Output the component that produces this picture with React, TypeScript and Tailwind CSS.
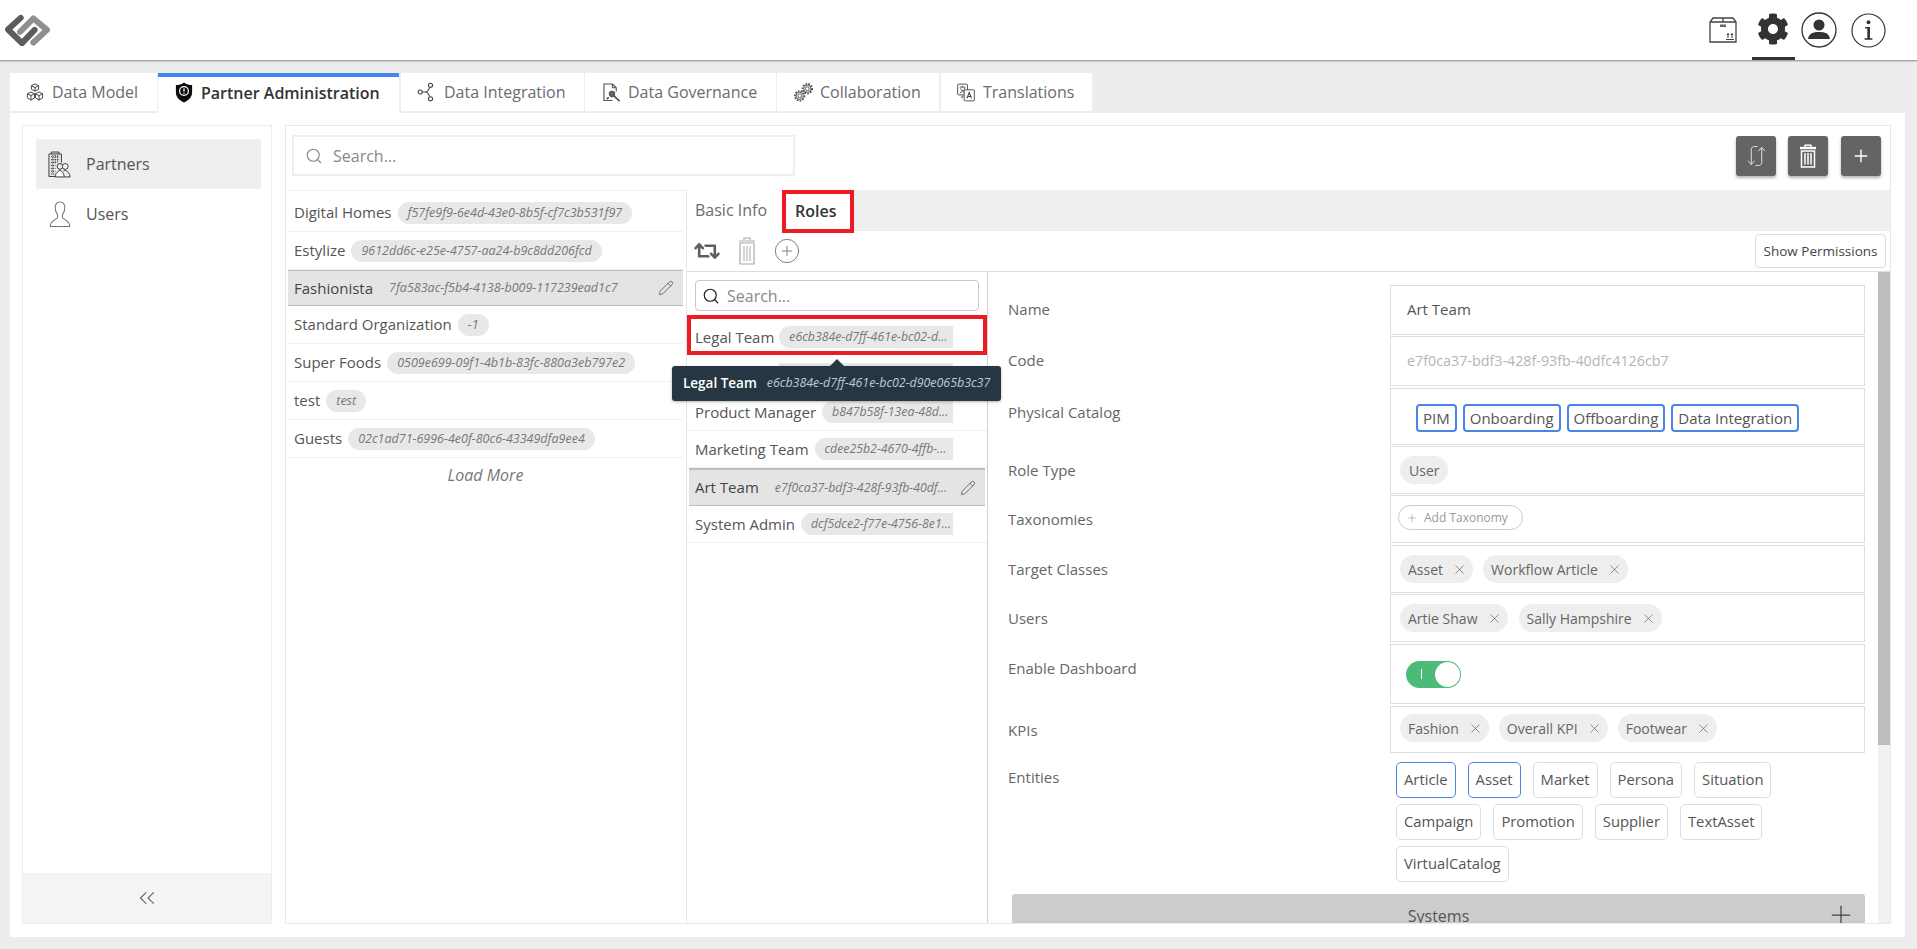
import React from 'react';
import { Search, Pencil, X, Plus, CirclePlus, ChevronsLeft } from 'lucide-react';
import { FaRetweet, FaCog } from 'react-icons/fa';

const Logo = () => (
  <svg viewBox="15 25 135 95" className="w-[45px] h-[32px]" fill="none" strokeWidth="18" strokeLinejoin="round" strokeLinecap="round">
    <path d="M60 78 L100 38 L141 72 L100 110" stroke="#8f8f8f" />
    <path d="M62 36 L24 71 L66 112 L104 72" stroke="#5c5c5c" />
  </svg>
);

const BoxIcon = () => (
  <svg viewBox="0 0 28 26" className="w-[28px] h-[26px]" fill="none" stroke="#444" strokeWidth="1.3">
    <path d="M1 5 L4 1 H24 L27 5 V25 H1 Z" />
    <path d="M1 5 H27 M14 1 V5" />
    <rect x="11" y="7.5" width="6" height="2.5" fill="#666" stroke="none" />
    <path d="M17 22.5 H25 M19 21 V16.5 M23 21 V16.5 M18 18 L19 16.5 L20 18 M22 18 L23 16.5 L24 18" strokeWidth="1" />
  </svg>
);

const UserCircle = () => (
  <svg viewBox="0 0 36 36" className="w-[36px] h-[36px]">
    <circle cx="18" cy="18" r="17" fill="none" stroke="#333" strokeWidth="1.3" />
    <circle cx="18" cy="13" r="5.5" fill="#333" />
    <path d="M7 27 C8 21 12 20 18 20 C24 20 28 21 29 27 Z" fill="#333" />
  </svg>
);

const InfoCircle = () => (
  <svg viewBox="0 0 36 36" className="w-[35px] h-[35px]">
    <circle cx="18" cy="18" r="17" fill="none" stroke="#333" strokeWidth="1.2" />
    <circle cx="18" cy="9.5" r="2" fill="#333" />
    <path d="M14.5 14.5 H19.5 V26 H22 V27.5 H14 V26 H16.8 V16 H14.5 Z" fill="#333" />
  </svg>
);

const CubesIcon = () => (
  <svg viewBox="0 0 20 20" className="w-[18px] h-[18px]" fill="none" stroke="#444" strokeWidth="1.1">
    <path d="M10 1 L14 3 V7 L10 9 L6 7 V3 Z M6 3 L10 5 L14 3 M10 5 V9" />
    <path d="M5.5 10 L9.5 12 V16.5 L5.5 19 L1.5 16.5 V12 Z M1.5 12 L5.5 14 L9.5 12 M5.5 14 V19" />
    <path d="M14.5 10 L18.5 12 V16.5 L14.5 19 L10.5 16.5 V12 Z M10.5 12 L14.5 14 L18.5 12 M14.5 14 V19" />
  </svg>
);

const ShieldIcon = () => (
  <svg viewBox="0 0 18 22" className="w-[18px] h-[21px]">
    <path d="M9 0.5 C11.5 2.5 14.5 3.2 17.5 3.2 V11 C17.5 16 13.5 19.5 9 21.5 C4.5 19.5 0.5 16 0.5 11 V3.2 C3.5 3.2 6.5 2.5 9 0.5 Z" fill="#0c0c0c" />
    <circle cx="9" cy="9.5" r="4.6" fill="none" stroke="#fff" strokeWidth="1.3" />
    <path d="M9 6.8 V10 M9 11.2 V12.3" stroke="#fff" strokeWidth="1.5" />
  </svg>
);

const NodesIcon = () => (
  <svg viewBox="0 0 20 22" className="w-[18px] h-[20px]" fill="none" stroke="#444" strokeWidth="1.2">
    <circle cx="3.5" cy="11" r="2.3" />
    <circle cx="15" cy="3.5" r="2.3" />
    <circle cx="15" cy="18.5" r="2.3" />
    <path d="M5.8 11 H9 M9 11 C11 11 13 9 14 5.8 M9 11 C11 11 13 13 14 16.2" />
  </svg>
);

const DocSearchIcon = () => (
  <svg viewBox="0 0 19 20" className="w-[18px] h-[19px]" fill="none" stroke="#555" strokeWidth="1.2">
    <path d="M10 18.5 H1 V1 H10 L14 5 V9 M10 1 V5 H14" />
    <circle cx="9.5" cy="11.5" r="2.8" fill="#666" />
    <path d="M11.5 13.5 L17.5 19 M6 15 L4 17" strokeWidth="1.8" />
  </svg>
);

const Gear = ({ cx, cy, r }: { cx: number; cy: number; r: number }) => (
  <g fill="none" stroke="#555">
    <circle cx={cx} cy={cy} r={r} strokeWidth="2" strokeDasharray="1.7 1.3" />
    <circle cx={cx} cy={cy} r={r - 1.2} strokeWidth="1" />
    <circle cx={cx} cy={cy} r={r - 3} strokeWidth="1" />
  </g>
);

const GearsIcon = () => (
  <svg viewBox="0 0 20 20" className="w-[19px] h-[19px]">
    <Gear cx={6} cy={13.5} r={5} />
    <Gear cx={14} cy={6} r={5} />
  </svg>
);

const TranslateIcon = () => (
  <svg viewBox="0 0 20 20" className="w-[18px] h-[19px]" fill="none" stroke="#444" strokeWidth="1">
    <rect x="0.7" y="0.7" width="11" height="12" rx="1" fill="#fff" />
    <path d="M3 4 H9.5 M6.2 2.5 V4 M4 5.5 C5 8 7 9.5 9.5 10.5 M8.7 5 C7.5 8 5.5 9.5 3 10.5" />
    <rect x="8" y="7" width="11.3" height="12.3" rx="1" fill="#fff" />
    <path d="M11 16.5 L13.6 10 L16.2 16.5 M12 14.4 H15.2" strokeWidth="1.2" />
    <path d="M5 15 H7 M5 15 L6.2 14 M5 15 L6.2 16" />
  </svg>
);

const PartnersIcon = () => (
  <svg viewBox="0 0 24 28" className="w-[23px] h-[27px]" fill="none" stroke="#333" strokeWidth="1">
    <path d="M1 26.5 V3 H14 V12 M1 26.5 H9 M3.5 3 V1 H11.5 V3" />
    <path d="M3 6 H12 M3 9 H12 M3 12 H9 M3 15 H8 M3 18 H8 M3 21 H8 M3 24 H8 M5 4 V24 M7.5 4 V13 M10 4 V12" strokeDasharray="1.3 0.9" />
    <circle cx="12.5" cy="16" r="3" />
    <circle cx="18" cy="16" r="3" fill="#fff" />
    <path d="M7.5 27 C8 22.5 10 21.5 12.5 20 C15 21.5 16.5 23 17 27 Z" fill="#fff" />
    <path d="M16 20.8 L18 20 C20.5 21.5 22.5 22.5 23 27 H17" />
  </svg>
);

const UserOutline = () => (
  <svg viewBox="0 0 22 28" className="w-[22px] h-[27px]" fill="none" stroke="#777" strokeWidth="1.1">
    <path d="M11 1 C7.5 1 6 3.5 6 7 C6 10.5 7.5 13 8.5 14.5 V17 C8.5 18.5 2 20 1 25 V26.5 H21 V25 C20 20 13.5 18.5 13.5 17 V14.5 C14.5 13 16 10.5 16 7 C16 3.5 14.5 1 11 1 Z" />
  </svg>
);

const SyncIcon = () => (
  <svg viewBox="0 0 20 24" className="w-[19px] h-[24px]" fill="none" stroke="#e4e4e4" strokeWidth="1">
    <path d="M1 17 L4.5 21 L8 17 M4.5 21 V5 C4.5 3 6 2 8 2 H11" />
    <path d="M12 7 L15.5 3 L19 7 M15.5 3 V19 C15.5 21 14 22 12 22 H9" />
  </svg>
);

const FilledTrash = () => (
  <svg viewBox="0 0 18 24" className="w-[18px] h-[24px]" fill="none" stroke="#fff">
    <path d="M6 3 V1.2 H12 V3" strokeWidth="1.4" />
    <path d="M1 4 H17" strokeWidth="2.4" />
    <path d="M2.5 7 V23 H15.5 V7 Z" strokeWidth="1.5" />
    <path d="M6 9 V20.5 M9 9 V20.5 M12 9 V20.5" strokeWidth="1.5" />
  </svg>
);

const OutlineTrash = () => (
  <svg viewBox="0 0 18 28" className="w-[20px] h-[28px]" fill="none" stroke="#aaa">
    <path d="M6 3 V1 H12 V3 M1 4 H17" strokeWidth="1.2" />
    <path d="M2 6 V27 H16 V6 Z" strokeWidth="1.2" />
    <path d="M6 9 V24 M9 9 V24 M12 9 V24" strokeWidth="1" />
  </svg>
);

const tabs = [
  { label: 'Data Model', icon: <CubesIcon />, cls: 'w-[147px] pl-[16px] gap-[8px] mr-[1px]' },
  { label: 'Partner Administration', icon: <ShieldIcon />, cls: 'w-[241px] pl-[17px] gap-[8px] mr-[2px]', active: true },
  { label: 'Data Integration', icon: <NodesIcon />, cls: 'w-[183px] pl-[16px] gap-[9px] mr-[1px]' },
  { label: 'Data Governance', icon: <DocSearchIcon />, cls: 'w-[191px] pl-[18px] gap-[7px] mr-[1px]' },
  { label: 'Collaboration', icon: <GearsIcon />, cls: 'w-[162px] pl-[17px] gap-[7px] mr-[2px]' },
  { label: 'Translations', icon: <TranslateIcon />, cls: 'w-[151px] pl-[16px] gap-[8px]' },
];

const partners = [
  { name: 'Digital Homes', id: 'f57fe9f9-6e4d-43e0-8b5f-cf7c3b531f97' },
  { name: 'Estylize', id: '9612dd6c-e25e-4757-aa24-b9c8dd206fcd' },
  { name: 'Fashionista', id: '7fa583ac-f5b4-4138-b009-117239ead1c7', selected: true },
  { name: 'Standard Organization', id: '-1' },
  { name: 'Super Foods', id: '0509e699-09f1-4b1b-83fc-880a3eb797e2' },
  { name: 'test', id: 'test' },
  { name: 'Guests', id: '02c1ad71-6996-4e0f-80c6-43349dfa9ee4' },
];

const roles = [
  { name: 'Product Manager', id: 'b847b58f-13ea-48d0-a1f2-7c6e01d2b3aa' },
  { name: 'Marketing Team', id: 'cdee25b2-4670-4ffb-9e0d-38f1a7c2d411' },
  { name: 'Art Team', id: 'e7f0ca37-bdf3-428f-93fb-40dfc4126cb7', selected: true },
  { name: 'System Admin', id: 'dcf5dce2-f77e-4756-8e13-52ab09c77d10' },
];

const IdChip = ({ text, bg = 'bg-[#e9e8e8]' }: { text: string; bg?: string }) => (
  <span className={`${bg} h-[22px] leading-[22px] rounded-full px-[10px] text-[12.5px] italic text-[#777] ml-[6px] whitespace-nowrap`}>
    {text}
  </span>
);

const TagChip = ({ text, close = true }: { text: string; close?: boolean }) => (
  <span className={`h-[28px] bg-[#eeeeee] rounded-full flex items-center text-[14px] text-[#666] ${close ? 'pl-[8px] pr-[6px]' : 'px-[9px]'}`}>
    {text}
    {close && <X size={15} strokeWidth={1} className="ml-[9px] text-[#555]" />}
  </span>
);

const FieldRow = ({ label, cls, children }: { label: string; cls: string; children: React.ReactNode }) => (
  <div className={`flex ${cls}`}>
    <div className="w-[402px] pl-[20px] pt-[13.5px] text-[15px] leading-[20px] text-[#666] shrink-0">{label}</div>
    <div className="w-[475px] shrink-0 border border-[#dedede] flex items-center">{children}</div>
  </div>
);

const entityRows = [
  [{ t: 'Article', on: true }, { t: 'Asset', on: true }, { t: 'Market' }, { t: 'Persona' }, { t: 'Situation' }],
  [{ t: 'Campaign' }, { t: 'Promotion' }, { t: 'Supplier' }, { t: 'TextAsset' }],
  [{ t: 'VirtualCatalog' }],
];

export default function App() {
  return (
    <div className="h-[949px] overflow-hidden bg-[#ededed] font-['Open_Sans',sans-serif] text-[#555] flex flex-col">
      {/* top bar */}
      <header className="h-[61px] shrink-0 bg-white border-b border-[#a3a3a3] shadow-[0_1px_1px_rgba(0,0,0,0.12)] flex items-center pl-[5px] pr-[31px]">
        <Logo />
        <div className="ml-auto flex items-center h-full">
          <BoxIcon />
          <div className="ml-[15px] w-[43px] h-full flex items-center justify-center border-b-[3px] border-[#333] pt-[1px] pr-[2px]">
            <FaCog size={32} className="text-[#333]" />
          </div>
          <div className="ml-[6px]"><UserCircle /></div>
          <div className="ml-[14px]"><InfoCircle /></div>
        </div>
      </header>

      {/* module tabs */}
      <nav className="mt-[12px] pl-[10px] flex items-start h-[40px] shrink-0">
        {tabs.map((t) => (
          <div
            key={t.label}
            className={`${t.cls} flex items-center bg-white text-[16px] ${
              t.active ? 'h-[40px] border-t-[4px] border-[#4285f4] font-semibold text-[#333] pb-[5px]' : 'h-[38px] text-[#6a6c70]'
            }`}
          >
            {t.icon}
            <span>{t.label}</span>
          </div>
        ))}
      </nav>

      <main className="ml-[10px] mr-[12px] h-[824px] shrink-0 bg-white pt-[12px] pl-[12px] pr-[14px] pb-[13px] flex gap-[13px]">
        {/* sidebar */}
        <aside className="w-[250px] shrink-0 border border-[#ececec] flex flex-col">
          <div className="flex-1 pt-[13px] pl-[13px] pr-[10px]">
            <div className="h-[50px] bg-[#eeeeee] rounded-[3px] flex items-center pl-[12px] gap-[15px] text-[16px]">
              <PartnersIcon />
              <span>Partners</span>
            </div>
            <div className="h-[50px] flex items-center pl-[13px] gap-[15px] text-[16px]">
              <UserOutline />
              <span>Users</span>
            </div>
          </div>
          <div className="h-[50px] bg-[#f4f4f4] flex items-center justify-center">
            <ChevronsLeft size={26} strokeWidth={1} className="text-[#666]" />
          </div>
        </aside>

        {/* main */}
        <section className="flex-1 min-w-0 border border-[#e6eaee] flex flex-col">
          <div className="h-[64px] shrink-0 flex items-center pl-[6px] pr-[9px] pb-[5px]">
            <div className="w-[503px] h-[41px] border-2 border-[#eeeeee] flex items-center pl-[11px] gap-[10px] text-[16px] text-[#888]">
              <Search size={18} strokeWidth={1.5} className="text-[#888]" />
              <span>Search...</span>
            </div>
            <div className="ml-auto flex">
              <button className="w-[40px] h-[40px] bg-[#636466] rounded-[3px] shadow-[0_2px_3px_rgba(0,0,0,0.3)] flex items-center justify-center"><SyncIcon /></button>
              <button className="w-[40px] h-[40px] ml-[12px] bg-[#636466] rounded-[3px] shadow-[0_2px_3px_rgba(0,0,0,0.3)] flex items-center justify-center"><FilledTrash /></button>
              <button className="w-[40px] h-[40px] ml-[13px] bg-[#636466] rounded-[3px] shadow-[0_2px_3px_rgba(0,0,0,0.3)] flex items-center justify-center"><Plus size={20} strokeWidth={1.7} className="text-white" /></button>
            </div>
          </div>

          <div className="flex-1 min-h-0 flex">
            {/* partner list */}
            <div className="w-[401px] shrink-0 border-r border-[#dfe7ef] border-t border-t-[#eef1f4] pt-[3px] pl-[2px] pr-[3px]">
              {partners.map((p) => (
                <div
                  key={p.name}
                  className={`flex items-center pl-[6px] text-[15px] ${
                    p.selected
                      ? 'h-[36px] bg-[#e5e4e4] border-t border-b border-[#bdbdbd] text-[#444]'
                      : 'h-[38px] border-b border-[#f1f1f1] text-[#555]'
                  }`}
                >
                  <span className="whitespace-nowrap">{p.name}</span>
                  <IdChip text={p.id} bg={p.selected ? 'bg-[#e5e4e4]' : 'bg-[#e9e8e8]'} />
                  {p.selected && <Pencil size={16} strokeWidth={1.4} className="ml-auto mr-[9px] text-[#666]" />}
                </div>
              ))}
              <div className="h-[34px] flex items-center justify-center text-[16px] italic text-[#777]">Load More</div>
            </div>

            {/* detail */}
            <div className="flex-1 min-w-0 flex flex-col">
              <div className="h-[41px] shrink-0 bg-[#efefef] flex items-start">
                <div className="w-[95px] h-[41px] bg-white flex items-center pl-[8px] pb-[2px] text-[16px] text-[#6a6c70]">Basic Info</div>
                <div className="w-[72px] h-[43px] bg-white border-4 border-[#ed1c24] flex items-center pl-[9px] pb-[2px] text-[16px] font-semibold text-[#333] relative z-10">Roles</div>
              </div>
              <div className="h-[41px] shrink-0 border-b border-[#dddddd] flex items-center pl-[7px] pr-[4px]">
                <FaRetweet size={26} className="text-[#5f5f5f]" />
                <div className="ml-[17px]"><OutlineTrash /></div>
                <CirclePlus size={28} strokeWidth={0.8} className="ml-[16px] text-[#777]" />
                <button className="ml-auto w-[131px] h-[34px] border border-[#dddddd] rounded-[4px] text-[13.5px] text-[#444]">Show Permissions</button>
              </div>

              <div className="flex-1 min-h-0 flex">
                {/* role list */}
                <div className="w-[301px] shrink-0 border-r border-[#cfd3d6] relative">
                  <div className="mt-[8px] mx-[8px] h-[31px] border border-[#c8c8c8] rounded-[4px] flex items-center pl-[6px] gap-[7px] text-[16px] text-[#888]">
                    <Search size={18} strokeWidth={1.6} className="text-[#222]" />
                    <span>Search...</span>
                  </div>
                  <div className="mt-[4px] h-[40px] border-4 border-[#ed1c24] flex items-center pl-[4px] pr-[30px] pt-[4px] text-[15px] text-[#555]">
                    <span className="whitespace-nowrap">Legal Team</span>
                    <span className="ml-[5px] flex-1 min-w-0 h-[22px] leading-[22px] bg-[#e9e8e8] rounded-l-full pl-[10px] pr-[2px] text-[12.3px] italic text-[#777] truncate">e6cb384e-d7ff-461e-bc02-d90e065b3c37</span>
                  </div>
                  <div className="h-[39px] flex items-center pl-[92px] pr-[34px] border-b border-[#f1f1f1]">
                    <span className="flex-1 h-[22px] bg-[#e9e8e8]"></span>
                  </div>
                  {roles.map((r) => (
                    <div
                      key={r.name}
                      className={`flex items-center text-[15px] ${
                        r.selected
                          ? 'h-[38px] ml-[2px] mr-[2px] pl-[6px] bg-[#e5e4e4] border-t-2 border-b border-[#bdbdbd] text-[#444] pr-[2px]'
                          : 'h-[37px] pl-[8px] border-b border-[#f1f1f1] text-[#555] pr-[34px]'
                      }`}
                    >
                      <span className="whitespace-nowrap">{r.name}</span>
                      <span className={`ml-[6px] flex-1 min-w-0 h-[22px] leading-[22px] rounded-l-full pl-[10px] pr-[2px] text-[12.3px] italic text-[#777] truncate ${r.selected ? 'bg-[#e5e4e4]' : 'bg-[#e9e8e8]'}`}>{r.id}</span>
                      {r.selected && <Pencil size={16} strokeWidth={1.4} className="ml-[6px] mr-[7px] shrink-0 text-[#666]" />}
                    </div>
                  ))}

                  {/* tooltip */}
                  <div className="absolute z-20 left-[-15px] top-[94px] w-[329px] h-[35px] bg-[#263743] rounded-[3px] shadow-[0_1px_3px_rgba(0,0,0,0.3)] flex items-center pl-[11px] whitespace-nowrap">
                    <span className="absolute left-[158px] top-[-7px] w-0 h-0 border-x-[7px] border-x-transparent border-b-[7px] border-b-[#263743]"></span>
                    <span className="text-[13.5px] font-semibold text-white">Legal Team</span>
                    <span className="ml-[10px] text-[12.4px] italic text-[#c3c9cd]">e6cb384e-d7ff-461e-bc02-d90e065b3c37</span>
                  </div>
                </div>

                {/* role form */}
                <div className="flex-1 min-w-0 overflow-hidden pt-[13px]">
                  <FieldRow label="Name" cls="h-[50px]">
                    <span className="pl-[16px] pb-[2px] text-[15px] text-[#555]">Art Team</span>
                  </FieldRow>
                  <FieldRow label="Code" cls="h-[50px] mt-[1px]">
                    <span className="pl-[16px] text-[14.3px] text-[#b5b5b5]">e7f0ca37-bdf3-428f-93fb-40dfc4126cb7</span>
                  </FieldRow>
                  <FieldRow label="Physical Catalog" cls="h-[57px] mt-[2px]">
                    <div className="pl-[25px] pt-[3px] flex gap-[6px]">
                      {['PIM', 'Onboarding', 'Offboarding', 'Data Integration'].map((c) => (
                        <span key={c} className="h-[28px] px-[5px] border-2 border-[#4a86e8] rounded-[4px] flex items-center text-[15px] text-[#555]">{c}</span>
                      ))}
                    </div>
                  </FieldRow>
                  <FieldRow label="Role Type" cls="h-[48px] mt-[1px]">
                    <div className="pl-[9px] flex"><TagChip text="User" close={false} /></div>
                  </FieldRow>
                  <FieldRow label="Taxonomies" cls="h-[48px] mt-[1px]">
                    <div className="pl-[7px] pb-[3px]">
                      <span className="h-[25px] border border-[#cccccc] rounded-full pl-[7px] pr-[14px] flex items-center text-[12px] text-[#999]">
                        <Plus size={12} strokeWidth={1.2} className="mr-[6px]" />Add Taxonomy
                      </span>
                    </div>
                  </FieldRow>
                  <FieldRow label="Target Classes" cls="h-[48px] mt-[2px]">
                    <div className="pl-[9px] flex gap-[10px]">
                      <TagChip text="Asset" />
                      <TagChip text="Workflow Article" />
                    </div>
                  </FieldRow>
                  <FieldRow label="Users" cls="h-[48px] mt-[1px]">
                    <div className="pl-[9px] flex gap-[11px]">
                      <TagChip text="Artie Shaw" />
                      <TagChip text="Sally Hampshire" />
                    </div>
                  </FieldRow>
                  <FieldRow label="Enable Dashboard" cls="h-[60px] mt-[2px]">
                    <div className="ml-[15px] w-[55px] h-[27px] bg-[#4cbb7a] rounded-full flex items-center pl-[15px] pr-[1px]">
                      <span className="w-[1px] h-[10px] bg-white"></span>
                      <span className="ml-auto w-[25px] h-[25px] bg-white rounded-full"></span>
                    </div>
                  </FieldRow>
                  <FieldRow label="KPIs" cls="h-[47px] mt-[2px]">
                    <div className="pl-[9px] pb-[3px] flex gap-[10px]">
                      <TagChip text="Fashion" />
                      <TagChip text="Overall KPI" />
                      <TagChip text="Footwear" />
                    </div>
                  </FieldRow>

                  <div className="flex mt-[9px]">
                    <div className="w-[408px] pl-[20px] pt-[5px] text-[15px] leading-[20px] text-[#666] shrink-0">Entities</div>
                    <div className="flex flex-col gap-[6px]">
                      {entityRows.map((row, i) => (
                        <div key={i} className="flex gap-[12px]">
                          {row.map((e) => (
                            <span
                              key={e.t}
                              className={`h-[36px] px-[7px] pb-[1px] rounded-[5px] border flex items-center text-[14.8px] text-[#555] ${
                                e.on ? 'border-[#4a86e8]' : 'border-[#dddddd]'
                              }`}
                            >
                              {e.t}
                            </span>
                          ))}
                        </div>
                      ))}
                    </div>
                  </div>

                  <div className="mt-[12px] ml-[24px] w-[853px] h-[44px] bg-[#cccccc] rounded-t-[3px] relative text-center pt-[10px] text-[16px] text-[#555]">
                    Systems
                    <Plus size={30} strokeWidth={1} className="absolute right-[9px] top-[6px] text-[#444]" />
                  </div>
                </div>

                {/* scrollbar */}
                <div className="w-[12px] shrink-0 bg-[#f1f1f1]">
                  <div className="h-[473px] bg-[#bdbdbd]"></div>
                </div>
              </div>
            </div>
          </div>
        </section>
      </main>
    </div>
  );
}
